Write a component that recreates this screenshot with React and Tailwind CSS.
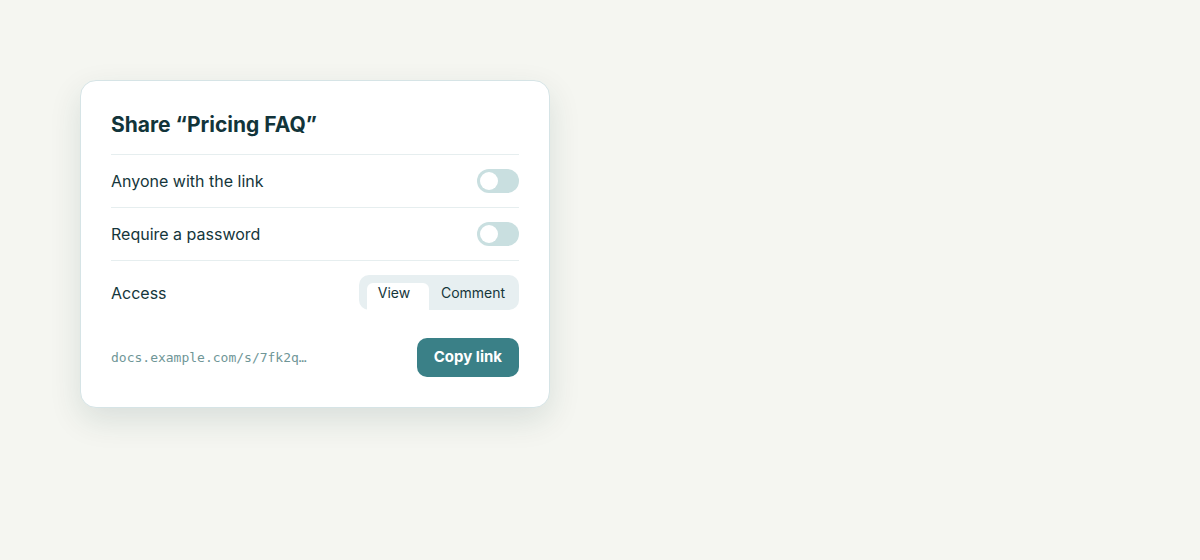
import React, { useState } from "react";

const Toggle = ({ on, onChange }) => (
  <button
    onClick={() => onChange(!on)}
    className={`relative h-6 w-[42px] rounded-full transition ${on ? "bg-[#3a8087]" : "bg-[#c9dfe0]"}`}
  >
    <span
      className={`absolute top-[3px] h-[18px] w-[18px] rounded-full bg-white transition ${on ? "left-[21px]" : "left-[3px]"}`}
    />
  </button>
);

export default function App() {
  const [anyone, setAnyone] = useState(false);
  const [password, setPassword] = useState(false);
  const [access, setAccess] = useState("view");

  return (
    <div className="min-h-screen w-full bg-[#f5f6f1] pl-20 pt-20 font-['Inter',sans-serif] text-[#15363b]">
      <div className="w-[470px] rounded-2xl border border-[#d6e4e6] bg-white p-[30px] shadow-[0_12px_32px_rgba(20,54,59,0.12)]">
        <h2 className="pb-[15px] text-[21px] leading-7 font-bold text-[#12343a]">Share “Pricing FAQ”</h2>

        {/* toggles */}
        <div className="flex items-center justify-between border-t border-[#e6eeef] py-[14px]">
          <span className="text-base">Anyone with the link</span>
          <Toggle on={anyone} onChange={setAnyone} />
        </div>
        <div className="flex items-center justify-between border-t border-[#e6eeef] py-[14px]">
          <span className="text-base">Require a password</span>
          <Toggle on={password} onChange={setPassword} />
        </div>

        {/* access */}
        <div className="flex items-center justify-between border-t border-[#e6eeef] pt-[14px]">
          <span className="text-base">Access</span>
          <div className="relative flex h-[35px] w-40 items-center rounded-[10px] bg-[#e7eff1] pl-2 pr-1 text-sm">
            <span
              className={`absolute top-2 bottom-0 rounded-t-md bg-white transition-all ${
                access === "view" ? "left-2 w-[62px]" : "left-[70px] w-[86px]"
              }`}
            />
            <button
              onClick={() => setAccess("view")}
              className="relative h-full w-[54px] text-center"
            >
              View
            </button>
            <button
              onClick={() => setAccess("comment")}
              className="relative h-full flex-1 pl-[10px] text-center"
            >
              Comment
            </button>
          </div>
        </div>

        {/* link */}
        <div className="mt-7 flex items-center justify-between">
          <span className="font-['DejaVu_Sans_Mono',monospace] text-[13px] font-medium text-[#6f9697]">
            docs.example.com/s/7fk2q…
          </span>
          <button className="h-[39px] rounded-[10px] bg-[#3a8087] px-[17px] text-[15px] font-bold text-white">
            Copy link
          </button>
        </div>
      </div>
    </div>
  );
}
